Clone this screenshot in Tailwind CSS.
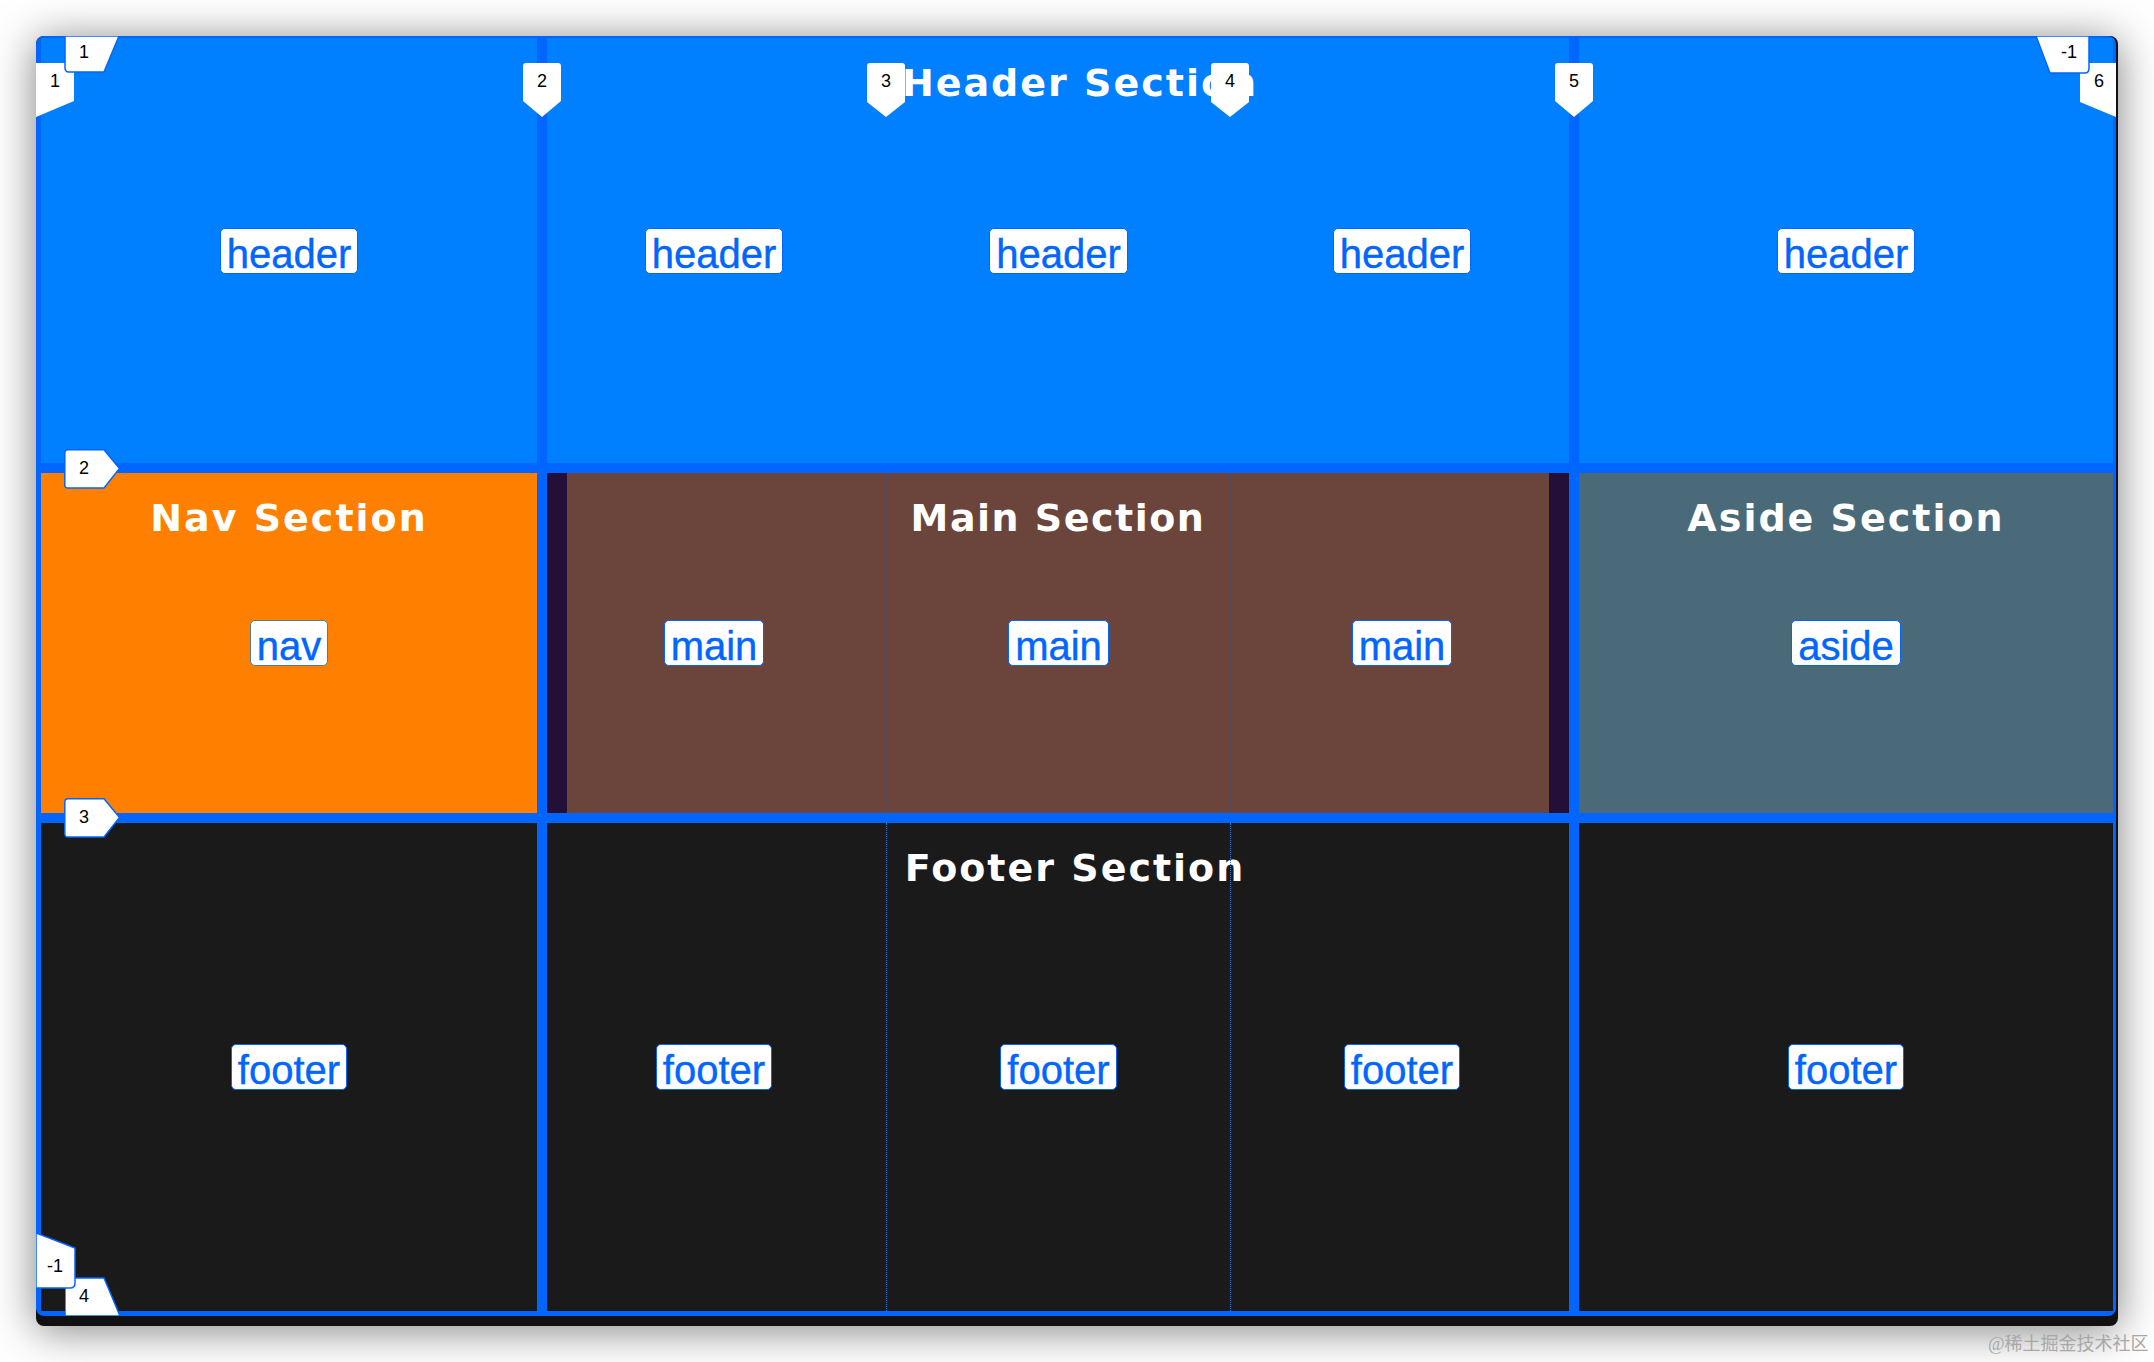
<!DOCTYPE html>
<html lang="en">
<head>
    <meta charset="UTF-8">
    <title>Grid layout</title>
    <script src="https://cdn.jsdelivr.net/npm/@tailwindcss/browser@4"></script>
</head>
<body class="relative h-[1362px] overflow-hidden bg-white pt-[36px] pl-[36px] font-['Liberation_Sans',sans-serif]">

    <!-- Window -->
    <div class="relative h-[1290px] w-[2082px] rounded-lg bg-[#111] shadow-[0_4px_44px_rgba(0,0,0,0.5)]">
        <div class="grid h-[1280px] w-[2080px] grid-cols-[496px_1022px_534px] grid-rows-[425px_340px_488px] gap-[10px] rounded-lg bg-[#06f] pt-[2px] pr-[3px] pb-[5px] pl-[5px]">

            <!-- Header row -->
            <section class="grid place-items-center bg-[#007fff]">
                <span class="rounded-[5px] border border-[#06f] bg-white px-[6px] pt-[6px] text-[40px] leading-[38px] text-[#06f] [-webkit-text-stroke:0.4px_#06f]">header</span>
            </section>
            <section class="grid grid-cols-1 grid-rows-1 bg-[#007fff]">
                <h2 class="col-start-1 row-start-1 mt-[20px] ml-[44px] self-start justify-self-center font-['DejaVu_Sans',sans-serif] text-[38px] leading-[50px] font-bold tracking-[2px] whitespace-nowrap text-white">Header Section</h2>
                <div class="col-start-1 row-start-1 mx-[-5px] grid grid-cols-3">
                    <div class="flex items-center justify-center"><span class="rounded-[5px] border border-[#06f] bg-white px-[6px] pt-[6px] text-[40px] leading-[38px] text-[#06f] [-webkit-text-stroke:0.4px_#06f]">header</span></div>
                    <div class="mr-[-1px] flex items-center justify-center"><span class="rounded-[5px] border border-[#06f] bg-white px-[6px] pt-[6px] text-[40px] leading-[38px] text-[#06f] [-webkit-text-stroke:0.4px_#06f]">header</span></div>
                    <div class="flex items-center justify-center"><span class="rounded-[5px] border border-[#06f] bg-white px-[6px] pt-[6px] text-[40px] leading-[38px] text-[#06f] [-webkit-text-stroke:0.4px_#06f]">header</span></div>
                </div>
            </section>
            <section class="grid place-items-center bg-[#007fff]">
                <span class="rounded-[5px] border border-[#06f] bg-white px-[6px] pt-[6px] text-[40px] leading-[38px] text-[#06f] [-webkit-text-stroke:0.4px_#06f]">header</span>
            </section>

            <!-- Middle row -->
            <section class="grid grid-cols-1 grid-rows-1 place-items-center bg-[#ff8000]">
                <h2 class="col-start-1 row-start-1 mt-[20px] self-start font-['DejaVu_Sans',sans-serif] text-[38px] leading-[50px] font-bold tracking-[2px] text-white">Nav Section</h2>
                <span class="col-start-1 row-start-1 rounded-[5px] border border-[#4f7f96] bg-white px-[6px] pt-[6px] text-[40px] leading-[38px] text-[#06f] [-webkit-text-stroke:0.4px_#06f]">nav</span>
            </section>
            <section class="grid grid-cols-1 grid-rows-1 bg-[#230f37]">
                <div class="col-start-1 row-start-1 mx-[20px] bg-[#6b443b]"></div>
                <h2 class="col-start-1 row-start-1 mt-[20px] self-start justify-self-center font-['DejaVu_Sans',sans-serif] text-[38px] leading-[50px] font-bold tracking-[1.5px] text-white">Main Section</h2>
                <div class="col-start-1 row-start-1 mx-[-5px] grid grid-cols-3">
                    <div class="flex items-center justify-center"><span class="rounded-[5px] border border-[#06f] bg-white px-[6px] pt-[6px] text-[40px] leading-[38px] text-[#06f] [-webkit-text-stroke:0.4px_#06f]">main</span></div>
                    <div class="mr-[-1px] flex items-center justify-center border-x border-dotted border-[#3f4a70]"><span class="rounded-[5px] border border-[#06f] bg-white px-[6px] pt-[6px] text-[40px] leading-[38px] text-[#06f] [-webkit-text-stroke:0.4px_#06f]">main</span></div>
                    <div class="flex items-center justify-center"><span class="rounded-[5px] border border-[#06f] bg-white px-[6px] pt-[6px] text-[40px] leading-[38px] text-[#06f] [-webkit-text-stroke:0.4px_#06f]">main</span></div>
                </div>
            </section>
            <section class="grid grid-cols-1 grid-rows-1 place-items-center bg-[#4a6a7a]">
                <h2 class="col-start-1 row-start-1 mt-[20px] self-start font-['DejaVu_Sans',sans-serif] text-[38px] leading-[50px] font-bold tracking-[2px] text-white">Aside Section</h2>
                <span class="col-start-1 row-start-1 rounded-[5px] border border-[#06f] bg-white px-[6px] pt-[6px] text-[40px] leading-[38px] text-[#06f] [-webkit-text-stroke:0.4px_#06f]">aside</span>
            </section>

            <!-- Footer row -->
            <section class="grid place-items-center bg-[#1a1a1a]">
                <span class="rounded-[5px] border border-[#06f] bg-white px-[6px] pt-[6px] text-[40px] leading-[38px] text-[#06f] [-webkit-text-stroke:0.4px_#06f]">footer</span>
            </section>
            <section class="grid grid-cols-1 grid-rows-1 bg-[#1a1a1a]">
                <h2 class="col-start-1 row-start-1 mt-[20px] ml-[34px] self-start justify-self-center font-['DejaVu_Sans',sans-serif] text-[38px] leading-[50px] font-bold tracking-[2px] whitespace-nowrap text-white">Footer Section</h2>
                <div class="col-start-1 row-start-1 mx-[-5px] grid grid-cols-3">
                    <div class="flex items-center justify-center"><span class="rounded-[5px] border border-[#06f] bg-white px-[6px] pt-[6px] text-[40px] leading-[38px] text-[#06f] [-webkit-text-stroke:0.4px_#06f]">footer</span></div>
                    <div class="mr-[-1px] flex items-center justify-center border-x border-dotted border-[#1c84ff]"><span class="rounded-[5px] border border-[#06f] bg-white px-[6px] pt-[6px] text-[40px] leading-[38px] text-[#06f] [-webkit-text-stroke:0.4px_#06f]">footer</span></div>
                    <div class="flex items-center justify-center"><span class="rounded-[5px] border border-[#06f] bg-white px-[6px] pt-[6px] text-[40px] leading-[38px] text-[#06f] [-webkit-text-stroke:0.4px_#06f]">footer</span></div>
                </div>
            </section>
            <section class="grid place-items-center bg-[#1a1a1a]">
                <span class="rounded-[5px] border border-[#06f] bg-white px-[6px] pt-[6px] text-[40px] leading-[38px] text-[#06f] [-webkit-text-stroke:0.4px_#06f]">footer</span>
            </section>
        </div>
    </div>

    <!-- Grid line badges, top edge -->
    <div class="absolute top-[63px] left-[36px] h-[54px] w-[38px] text-[18px] leading-[36px] text-black">
        <svg class="absolute inset-0" width="38" height="54" viewBox="0 0 38 54"><path d="M0 0H38V38L0 54Z" fill="#fff"/></svg>
        <span class="absolute top-0 left-[14px]">1</span>
    </div>
    <div class="absolute top-[36px] left-[64px] h-[37px] w-[55px] text-[18px] leading-[32px] text-black">
        <svg class="absolute inset-0" width="55" height="37" viewBox="0 0 55 37"><path d="M1 0H55L40 36H5Q1 36 1 32Z" fill="#fff" stroke="#06f" stroke-width="1.5"/></svg>
        <span class="absolute top-0 left-[15px]">1</span>
    </div>
    <div class="absolute top-[63px] left-[523px] h-[54px] w-[38px] text-[18px] leading-[36px] text-black">
        <svg class="absolute inset-0" width="38" height="54" viewBox="0 0 38 54"><path d="M3 0H35Q38 0 38 3V38L19 54L0 38V3Q0 0 3 0Z" fill="#fff"/></svg>
        <span class="absolute top-0 left-[14px]">2</span>
    </div>
    <div class="absolute top-[63px] left-[867px] h-[54px] w-[38px] text-[18px] leading-[36px] text-black">
        <svg class="absolute inset-0" width="38" height="54" viewBox="0 0 38 54"><path d="M3 0H35Q38 0 38 3V39L19 54L0 39V3Q0 0 3 0Z" fill="#fff"/></svg>
        <span class="absolute top-0 left-[14px]">3</span>
    </div>
    <div class="absolute top-[63px] left-[1211px] h-[54px] w-[38px] text-[18px] leading-[36px] text-black">
        <svg class="absolute inset-0" width="38" height="54" viewBox="0 0 38 54"><path d="M3 0H35Q38 0 38 3V39L19 54L0 39V3Q0 0 3 0Z" fill="#fff"/></svg>
        <span class="absolute top-0 left-[14px]">4</span>
    </div>
    <div class="absolute top-[63px] left-[1555px] h-[54px] w-[38px] text-[18px] leading-[36px] text-black">
        <svg class="absolute inset-0" width="38" height="54" viewBox="0 0 38 54"><path d="M3 0H35Q38 0 38 3V38L19 54L0 38V3Q0 0 3 0Z" fill="#fff"/></svg>
        <span class="absolute top-0 left-[14px]">5</span>
    </div>
    <div class="absolute top-[63px] left-[2080px] h-[54px] w-[36px] text-[18px] leading-[36px] text-black">
        <svg class="absolute inset-0" width="36" height="54" viewBox="0 0 36 54"><path d="M0 0H36V54L0 39Z" fill="#fff"/></svg>
        <span class="absolute top-0 left-[14px]">6</span>
    </div>
    <div class="absolute top-[36px] left-[2036px] h-[38px] w-[54px] text-[18px] leading-[32px] text-black">
        <svg class="absolute inset-0" width="54" height="38" viewBox="0 0 54 38"><path d="M0 0H53V32Q53 37 49 37H14Z" fill="#fff" stroke="#06f" stroke-width="1.5"/></svg>
        <span class="absolute top-0 left-[25px]">-1</span>
    </div>

    <!-- Grid line badges, left edge -->
    <div class="absolute top-[449px] left-[64px] h-[40px] w-[57px] text-[18px] leading-[38px] text-black">
        <svg class="absolute inset-0" width="57" height="40" viewBox="0 0 57 40"><path d="M4 .8H40L55.5 19.5L40 39H4Q.8 39 .8 36V4Q.8 .8 4 .8Z" fill="#fff" stroke="#06f" stroke-width="1.5"/></svg>
        <span class="absolute top-0 left-[15px]">2</span>
    </div>
    <div class="absolute top-[798px] left-[64px] h-[40px] w-[57px] text-[18px] leading-[38px] text-black">
        <svg class="absolute inset-0" width="57" height="40" viewBox="0 0 57 40"><path d="M4 .8H40L55.5 19.5L40 39H4Q.8 39 .8 36V4Q.8 .8 4 .8Z" fill="#fff" stroke="#06f" stroke-width="1.5"/></svg>
        <span class="absolute top-0 left-[15px]">3</span>
    </div>
    <div class="absolute top-[1277px] left-[65px] h-[39px] w-[56px] text-[18px] leading-[38px] text-black">
        <svg class="absolute inset-0" width="56" height="39" viewBox="0 0 56 39"><path d="M0 39V1H39L55 39Z" fill="#fff" stroke="#06f" stroke-width="1.5"/></svg>
        <span class="absolute top-0 left-[14px]">4</span>
    </div>
    <div class="absolute top-[1232px] left-[36px] h-[57px] w-[40px] text-[18px] leading-[68px] text-black">
        <svg class="absolute inset-0" width="40" height="57" viewBox="0 0 40 57"><path d="M0 1L39 16V51Q39 56 34 56H0Z" fill="#fff" stroke="#06f" stroke-width="1.5"/></svg>
        <span class="absolute top-0 left-[11px]">-1</span>
    </div>

    <!-- Watermark -->
    <span class="absolute top-[1332px] left-[1988px] font-['Liberation_Serif','Noto_Sans_CJK_SC',serif] text-[18px] leading-[24px] whitespace-nowrap text-[#a8a8a8]">@稀土掘金技术社区</span>
</body>
</html>
